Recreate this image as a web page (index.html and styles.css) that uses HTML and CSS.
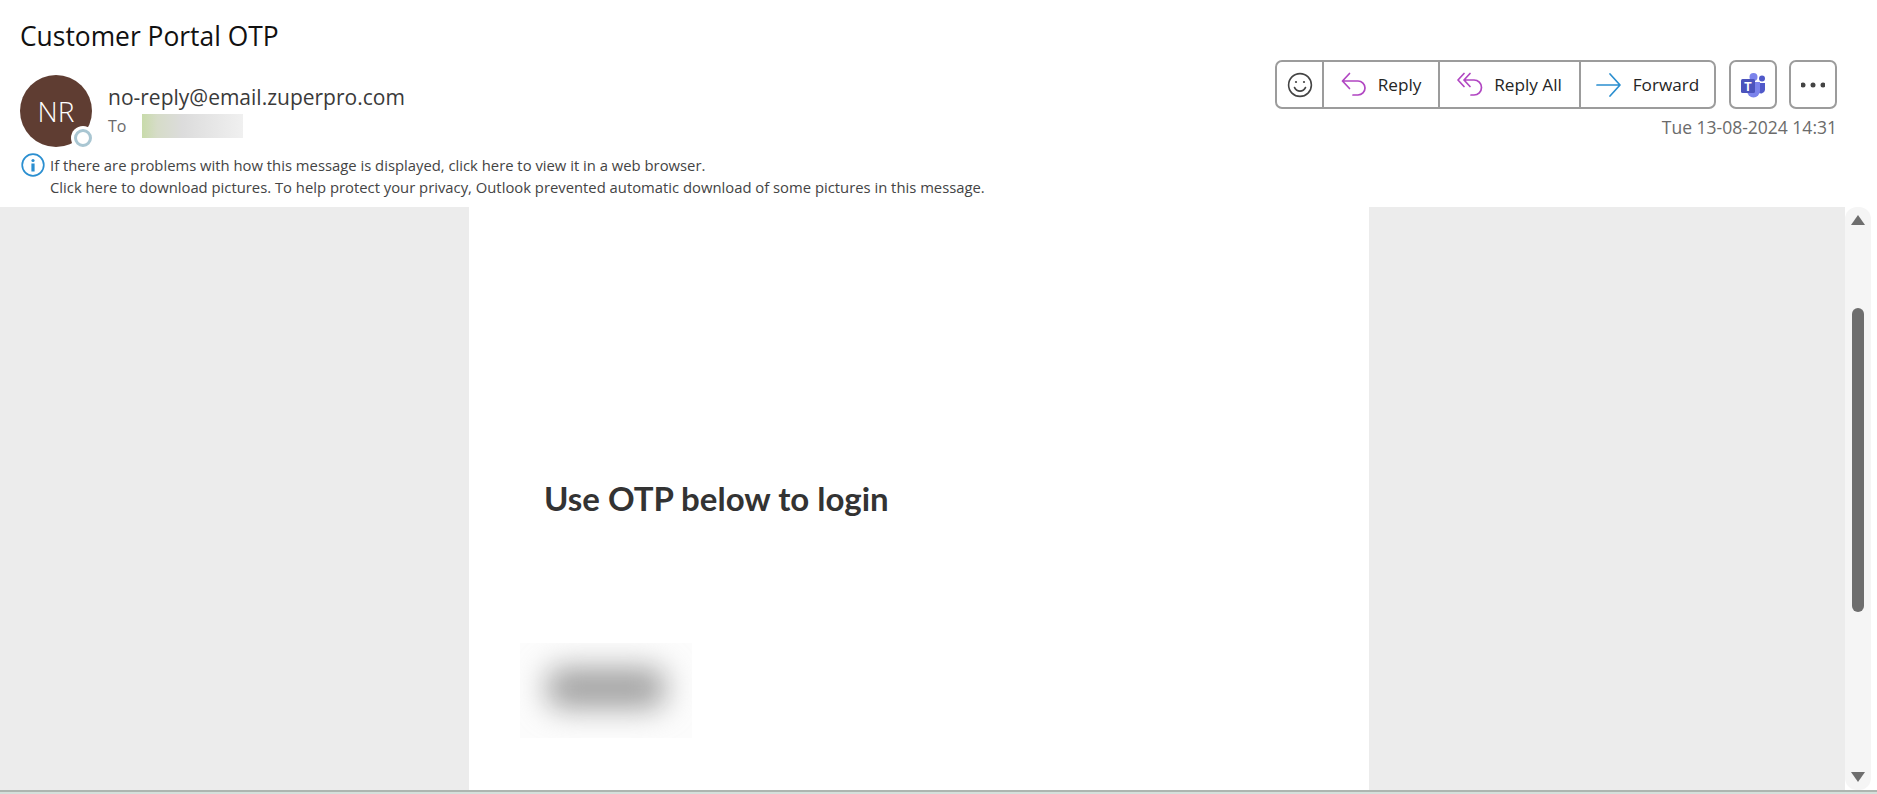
FILE: index.html
```html
<!DOCTYPE html>
<html lang="en">
<head>
    <meta charset="UTF-8">
    <meta name="viewport" content="width=device-width, initial-scale=1.0">
    <title>Customer Portal OTP</title>
    <link rel="stylesheet" href="styles.css">
</head>
<body>
    <div class="mail-header">
        <div class="subject">Customer Portal OTP</div>
        <div class="meta-row">
            <div class="sender">
                <div class="avatar">NR<span class="presence"></span></div>
                <div class="sender-text">
                    <div class="sender-name">no-reply@email.zuperpro.com</div>
                    <div class="to-row">To <span class="to-redacted"></span></div>
                </div>
            </div>
            <div class="actions">
                <div class="action-row">
                    <div class="btn-group">
                        <button class="btn btn-emoji" aria-label="React">
                            <svg width="26" height="26" viewBox="0 0 26 26" fill="none" stroke="#444" stroke-width="1.6" stroke-linecap="round">
                                <circle cx="13" cy="13" r="11.4"/>
                                <path d="M7.5 15.5c1.4 2.6 3.4 3.6 5.5 3.6s4.100-1 5.500-3.600"/>
                                <circle cx="9" cy="10" r="1.1" fill="#444" stroke="none"/>
                                <circle cx="17" cy="10" r="1.100" fill="#444" stroke="none"/>
                            </svg>
                        </button>
                        <button class="btn btn-reply">
                            <svg width="26" height="26" viewBox="0 0 26 26" fill="none" stroke="#b146c2" stroke-width="1.7" stroke-linecap="round" stroke-linejoin="round">
                                <path d="M8.500 1.500L1.500 9l7 7.500M1.500 9H17a7 7 0 0 1 0 14h-5"/>
                            </svg>
                            Reply
                        </button>
                        <button class="btn btn-reply-all">
                            <svg width="26" height="26" viewBox="0 0 26 26" fill="none" stroke="#b146c2" stroke-width="1.7" stroke-linecap="round" stroke-linejoin="round">
                                <path d="M7 1.500L1 8l6 6.500M13 1.500L7 8l6 6.500M7 8h10a7.500 7.500 0 0 1 0 15h-3"/>
                            </svg>
                            Reply All
                        </button>
                        <button class="btn btn-forward">
                            <svg width="26" height="26" viewBox="0 0 26 26" fill="none" stroke="#2b8fd0" stroke-width="1.7" stroke-linecap="round" stroke-linejoin="round">
                                <path d="M1 13h22.500M14 2l10 11-10 11"/>
                            </svg>
                            Forward
                        </button>
                    </div>
                    <button class="btn btn-single" aria-label="Share to Teams">
                        <svg width="26" height="26" viewBox="0 0 26 26">
                            <circle cx="22" cy="6.500" r="3" fill="#5059c9"/>
                            <path d="M18 11h7v7a4 4 0 0 1-7 2z" fill="#5059c9"/>
                            <circle cx="13.500" cy="5" r="4" fill="#7b83eb"/>
                            <path d="M7 10h13v9a6.500 6.500 0 0 1-13 0z" fill="#7b83eb"/>
                            <rect x="1" y="7" width="14" height="14" rx="1.500" fill="#4b53bc"/>
                            <text class="teams-t" x="8" y="18.500">T</text>
                        </svg>
                    </button>
                    <button class="btn btn-single" aria-label="More actions">
                        <svg width="24" height="8" viewBox="0 0 24 8" fill="#444">
                            <circle cx="2" cy="4" r="2.500"/>
                            <circle cx="12" cy="4" r="2.500"/>
                            <circle cx="22" cy="4" r="2.500"/>
                        </svg>
                    </button>
                </div>
                <div class="sent-date">Tue 13-08-2024 14:31</div>
            </div>
        </div>
        <div class="info-bar">
            <svg class="info-icon" width="24" height="24" viewBox="0 0 24 24">
                <circle cx="12" cy="12" r="10.800" fill="none" stroke="#2b8fd0" stroke-width="1.700"/>
                <circle cx="12" cy="7.500" r="1.600" fill="#2b8fd0"/>
                <rect x="10.400" y="10.500" width="3.200" height="8" fill="#2b8fd0"/>
            </svg>
            <div class="info-text">
                <p>If there are problems with how this message is displayed, click here to view it in a web browser.</p>
                <p>Click here to download pictures. To help protect your privacy, Outlook prevented automatic download of some pictures in this message.</p>
            </div>
        </div>
    </div>

    <div class="mail-view">
        <div class="gutter gutter-left"></div>
        <div class="message">
            <h1>Use OTP below to login</h1>
            <div class="otp-box"><div class="otp-smudge"></div></div>
        </div>
        <div class="gutter gutter-right"></div>
        <div class="scrollbar">
            <span class="arrow arrow-up"></span>
            <span class="thumb"></span>
            <span class="arrow arrow-down"></span>
        </div>
    </div>
    <div class="status-line"></div>
</body>
</html>
```

FILE: styles.css
```css
html, body {
    height: 100%;
}
body {
    font-family: "Open Sans", "Noto Sans", sans-serif;
    margin: 0;
    background-color: #fff;
    color: #252525;
    display: flex;
    flex-direction: column;
    overflow: hidden;
}
.mail-header {
    height: 207px;
    padding: 0 40px 0 20px;
    flex: none;
    box-sizing: border-box;
}
.subject {
    font-size: 26.400px;
    line-height: 32px;
    padding-top: 20px;
    color: #111;
}
.meta-row {
    display: flex;
    justify-content: space-between;
    align-items: flex-start;
    margin-top: 8px;
    height: 94px;
}
.sender {
    display: flex;
    margin-top: 15px;
}
.avatar {
    position: relative;
    width: 72px;
    height: 72px;
    border-radius: 50%;
    background-color: #5f3d32;
    color: #fff;
    font-size: 28px;
    font-weight: 300;
    line-height: 72px;
    text-align: center;
}
.presence {
    position: absolute;
    right: 0;
    bottom: 0;
    width: 12px;
    height: 12px;
    border: 3px solid #a9c6d2;
    border-radius: 50%;
    background-color: #fff;
    box-shadow: 0 0 0 3px #fff;
}
.sender-text {
    margin-left: 16px;
}
.sender-name {
    font-size: 21px;
    line-height: 28px;
    margin-top: 8px;
    color: #3a3a3a;
}
.to-row {
    display: flex;
    align-items: center;
    font-size: 16px;
    line-height: 24px;
    margin-top: 3px;
    color: #6b6b6b;
}
.to-redacted {
    width: 101px;
    height: 24px;
    margin-left: 16px;
    background: linear-gradient(90deg, #c8dbaa 0%, #d6dcc8 15%, #dcdcdc 40%, #f0f0f0 100%);
}
.actions {
    display: flex;
    flex-direction: column;
    align-items: flex-end;
}
.action-row {
    display: flex;
    gap: 12px;
}
.btn-group {
    display: flex;
    border: 2px solid #9c9c9c;
    border-radius: 7px;
    height: 49px;
    box-sizing: border-box;
    margin-right: 1px;
}
.btn {
    display: flex;
    align-items: center;
    justify-content: center;
    background: transparent;
    border: none;
    padding: 0;
    font-family: inherit;
    font-size: 17.200px;
    color: #252525;
    gap: 11px;
    box-sizing: border-box;
}
.btn-group .btn {
    border-right: 2px solid #9c9c9c;
}
.btn-group .btn:last-child {
    border-right: none;
}
.btn-emoji {
    width: 47px;
}
.btn-reply {
    width: 116px;
}
.btn-reply-all {
    width: 141px;
}
.btn-forward {
    width: 133px;
}
.btn-single {
    width: 48px;
    height: 49px;
    border: 2px solid #9c9c9c;
    border-radius: 7px;
}
.teams-t {
    font-family: "Liberation Sans", sans-serif;
    font-size: 12px;
    font-weight: bold;
    fill: #fff;
    text-anchor: middle;
}
.sent-date {
    font-size: 17.500px;
    line-height: 22px;
    margin-top: 7px;
    color: #6b6b6b;
}
.info-bar {
    display: flex;
    gap: 5px;
    margin-top: -1px;
    padding-left: 1px;
}
.info-icon {
    flex: none;
}
.info-text {
    font-size: 14.820px;
    line-height: 22px;
    padding-top: 1px;
    color: #444;
}
.info-text p {
    margin: 0;
}
.mail-view {
    flex: 1;
    display: flex;
    background-color: #fff;
    min-height: 0;
}
.gutter {
    background-color: #ececec;
}
.gutter-left {
    width: 469px;
}
.gutter-right {
    width: 476px;
}
.message {
    width: 900px;
    box-sizing: border-box;
    padding: 271px 0 0 51px;
}
.message h1 {
    font-family: Lato, "Open Sans", sans-serif;
    font-size: 33px;
    line-height: 40px;
    margin: 0 0 0 24px;
    color: #333;
}
.otp-box {
    width: 172px;
    height: 95px;
    margin-top: 125px;
    padding-bottom: 6px;
    box-sizing: border-box;
    background-color: #fcfcfc;
    overflow: hidden;
    display: flex;
    align-items: center;
    justify-content: center;
}
.otp-smudge {
    flex: none;
    width: 118px;
    height: 40px;
    border-radius: 14px;
    background-color: #a0a0a0;
    filter: blur(15px);
}
.scrollbar {
    width: 26px;
    margin-right: 6px;
    background-color: #f5f5f5;
    border-radius: 12px;
    display: flex;
    flex-direction: column;
    align-items: center;
}
.arrow {
    width: 0;
    height: 0;
    border-left: 7px solid transparent;
    border-right: 7px solid transparent;
}
.arrow-up {
    margin-top: 8px;
    border-bottom: 10px solid #6e6e6e;
}
.thumb {
    width: 12px;
    height: 304px;
    margin-top: 83px;
    border-radius: 6px;
    background-color: #6e6e6e;
}
.arrow-down {
    margin-top: 160px;
    border-top: 10px solid #6e6e6e;
}
.status-line {
    flex: none;
    height: 4px;
    box-sizing: border-box;
    border-top: 2px solid #aeb5b0;
    background-color: #d5e0db;
}
```
